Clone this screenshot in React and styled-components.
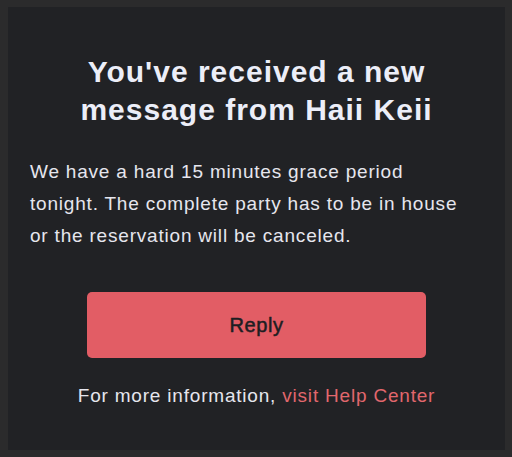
import React from "react";
import styled, { createGlobalStyle } from "styled-components";

const Global = createGlobalStyle`
  html, body { margin: 0; padding: 0; background: #2b2b2c; }
  body { font-family: "Liberation Sans", Arial, sans-serif; }
`;

const Frame = styled.div`
  width: 512px;
  height: 457px;
  box-sizing: border-box;
  padding: 7px 7px 7px 8px;
  background: #2b2b2c;
`;

const Panel = styled.div`
  height: 100%;
  box-sizing: border-box;
  background: #212225;
  padding: 46px 22px 0;
  display: flex;
  flex-direction: column;
  align-items: center;
`;

const Title = styled.h1`
  margin: 0;
  font-size: 30px;
  line-height: 38px;
  font-weight: 700;
  letter-spacing: 1px;
  color: #eceef8;
  text-align: center;
`;

const Body = styled.p`
  margin: 27px 10px 0 0;
  align-self: stretch;
  font-size: 19px;
  line-height: 32px;
  letter-spacing: 0.8px;
  color: #e6e6ee;
`;

const Button = styled.button`
  margin-top: 40px;
  width: 339px;
  height: 66px;
  border: none;
  border-radius: 5px;
  background: #e25d65;
  color: #1d1e22;
  font-family: "Liberation Sans", Arial, sans-serif;
  font-size: 20px;
  font-weight: 400;
  letter-spacing: 0.6px;
  -webkit-text-stroke: 0.5px #1d1e22;
  cursor: pointer;
`;

const Footer = styled.p`
  margin: 26px 0 0;
  font-size: 19px;
  line-height: 24px;
  letter-spacing: 0.8px;
  color: #e6e6ee;
  text-align: center;
  white-space: nowrap;
`;

const Link = styled.a`
  color: #e2676d;
  text-decoration: none;
`;

export default function App() {
  return (
    <>
      <Global />
      <Frame>
        <Panel>
          <Title>
            You've received a new
            <br />
            message from Haii Keii
          </Title>
          <Body>
            We have a hard 15 minutes grace period tonight. The complete party has to be in house or the reservation will be canceled.
          </Body>
          <Button>Reply</Button>
          <Footer>
            For more information, <Link href="#">visit Help Center</Link>
          </Footer>
        </Panel>
      </Frame>
    </>
  );
}
